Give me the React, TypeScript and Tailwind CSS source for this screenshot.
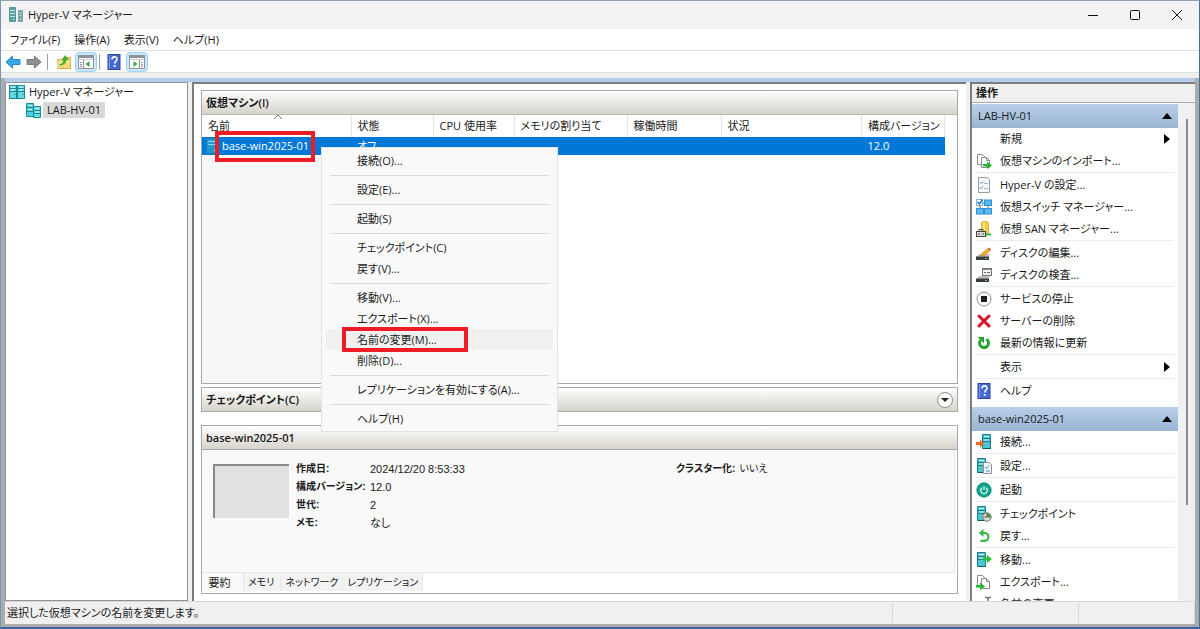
import type { ReactNode } from "react"

const ServerPair = ({ className = "size-4" }: { className?: string }) => (
  <svg viewBox="0 0 16 16" className={className}>
    <rect x="0.5" y="1.5" width="7" height="13" fill="#62dce2" stroke="#1d8996" />
    <rect x="8.5" y="1.5" width="7" height="13" fill="#62dce2" stroke="#1d8996" />
    <path d="M1 4.5h14M1 7.5h14" stroke="#1d8996" />
    <path d="M2 3h4M10 3h4M2 6h4M10 6h4" stroke="#d7f8f8" />
    <path d="M5 10.5h1M13 10.5h1" stroke="#0d6370" />
  </svg>
)

const HostIcon = () => (
  <svg viewBox="0 0 16 16" className="size-4">
    <path d="M1.5 1.500h7v13h-7z" fill="#4fd0d8" stroke="#1d8996" />
    <path d="M8.5 4.5h7v11h-7z" fill="#62dce2" stroke="#1d8996" />
    <path d="M2 5.5h6M2 9.5h6M9 8.5h6M9 11.5h6" stroke="#1d8996" />
    <path d="M3 3.500h4M3 7.5h4M10 6.5h4M10 10h4" stroke="#c5f3f4" />
  </svg>
)

const AppIcon = () => (
  <svg viewBox="0 0 16 16" className="size-4">
    <path d="M1.500 0.5h6v14h-6z" fill="#5aa3a6" stroke="#5c9599" />
    <path d="M10.5 3.5h4v11h-4z" fill="#6fa9ab" stroke="#7aa3a7" />
    <path d="M2 3.5h5M2 6.5h5M2 9.5h5M11.500 6h2M11.500 8.5h2" stroke="#c6e4e3" />
    <path d="M5 12.5h1M12 12.5h1" stroke="#e9ffff" />
  </svg>
)

const Tower = () => (
  <>
    <path d="M1.5 0.5h8v14h-8z" fill="#4cc6cf" stroke="#1b7d89" />
    <path d="M2 4.5h7M2 7.5h7" stroke="#1b7d89" />
    <path d="M3 2.5h5M3 6h5" stroke="#d5f7f8" />
    <path d="M2 14.5h8" stroke="#125c66" />
  </>
)

const SheetPair = ({ children }: { children: ReactNode }) => (
  <svg viewBox="0 0 16 16" className="size-4">
    <path d="M1.5 1.5h5l2 2v8h-7z" fill="#fff" stroke="#8c8c8c" />
    <path d="M5.500 4.500h5l3 3v7h-8z" fill="#fff" stroke="#8c8c8c" />
    <path d="M10.500 4.500v3h3" fill="none" stroke="#8c8c8c" />
    {children}
  </svg>
)

const ImportIcon = () => (
  <SheetPair>
    <path d="M7 11h4V8.500l5 4-5 3.500v-2.500H7z" fill="#22b52c" />
  </SheetPair>
)

const ExportIcon = () => (
  <SheetPair>
    <path d="M0 11h4V8.500l5 4-5 3.500v-2.500H0z" fill="#22b52c" />
  </SheetPair>
)

const SettingsIcon = () => (
  <svg viewBox="0 0 16 16" className="size-4">
    <path d="M2.500 0.500h9l2 2v13h-11z" fill="#f4f6f8" stroke="#9a9ea3" />
    <path d="M4 5.500l1 1 2-2M4 10.500l1 1 2-2" fill="none" stroke="#2c8ad8" />
    <path d="M8 6.500h4M8 11.500h4" stroke="#a8b4c0" />
  </svg>
)

const SwitchIcon = () => (
  <svg viewBox="0 0 16 16" className="size-4">
    <path d="M4 7v3M12 6v4M7 4h3M7 12h3" stroke="#5d6b78" />
    <rect x="0.5" y="0.500" width="6" height="6" fill="#fff" stroke="#8ab4d4" />
    <path d="M1.500 3l2 2 3-4.500" fill="none" stroke="#1e7fd0" strokeWidth="1.500" />
    <rect x="8.500" y="1" width="7" height="5.500" fill="#5ab8f4" stroke="#2f8fd0" />
    <rect x="0.500" y="9.500" width="7" height="5.500" fill="#5ab8f4" stroke="#2f8fd0" />
    <rect x="8.500" y="9.500" width="7" height="5.500" fill="#5ab8f4" stroke="#2f8fd0" />
  </svg>
)

const SanIcon = () => (
  <svg viewBox="0 0 16 16" className="size-4">
    <path d="M5.500 1.500c2-1.500 5-1.500 7 0v11h-7z" fill="#f1cf45" stroke="#dfb937" />
    <path d="M8 2v9" stroke="#fbeb9b" strokeWidth="1.500" />
    <path d="M9 13.500h6" stroke="#33b93a" strokeWidth="2" />
    <rect x="0.500" y="10.500" width="9" height="5" fill="#ddd" stroke="#444" />
    <path d="M3 10V8.500h4V10M3 12v2M7 12v2" fill="none" stroke="#444" />
  </svg>
)

const DiskBase = () => (
  <>
    <path d="M3 9h11l-2 4H0z" fill="#bdbdbd" />
    <path d="M0 11.500h13v3.500H0z" fill="#3d3d3d" />
    <path d="M9 13.500h2" stroke="#59d65c" />
  </>
)

const DiskEditIcon = () => (
  <svg viewBox="0 0 16 16" className="size-4">
    <DiskBase />
    <path d="M5 11l1-3 6-4.500 2 2.500-6 4.500z" fill="#f0ae2f" stroke="#b9791a" strokeWidth="0.500" />
    <path d="M12 3.500l1.500-1 1.500 2-1 1.300z" fill="#e4593b" />
  </svg>
)

const DiskCheckIcon = () => (
  <svg viewBox="0 0 16 16" className="size-4">
    <DiskBase />
    <rect x="6.500" y="1.500" width="9" height="7" fill="#f4f4f4" stroke="#777" />
    <path d="M7 2.500h8" stroke="#888" />
    <path d="M8 5.500h2M11 5.500h3" stroke="#667" />
  </svg>
)

const StopIcon = () => (
  <svg viewBox="0 0 16 16" className="size-4">
    <circle cx="8" cy="8" r="7" fill="#fff" stroke="#8d8d8d" />
    <rect x="5" y="5" width="6" height="6" fill="#1d1d1d" />
  </svg>
)

const RemoveIcon = () => (
  <svg viewBox="0 0 16 16" className="size-4">
    <path d="M3 3l10 10M13 3L3 13" stroke="#db1020" strokeWidth="3" strokeLinecap="round" />
  </svg>
)

const RefreshIcon = () => (
  <svg viewBox="0 0 16 16" className="size-4">
    <path d="M10.500 4.200a4.500 4.500 0 1 1-6 1" fill="none" stroke="#21a52d" strokeWidth="3" />
    <path d="M1.800 2h6.200v6.500z" fill="#21a52d" />
  </svg>
)

const HelpIcon = () => (
  <svg viewBox="0 0 16 16" className="size-4">
    <rect x="2" y="0.500" width="12" height="15" fill="#4468d4" stroke="#2c479f" />
    <path d="M3.500 1v14" stroke="#7f9cec" />
    <path d="M6 5.500c0-3.500 5-3.300 5-.3 0 2-2.300 2-2.300 4.300" fill="none" stroke="#fff" strokeWidth="1.600" />
    <rect x="7.800" y="11" width="1.800" height="1.800" fill="#fff" />
  </svg>
)

const ConnectIcon = () => (
  <svg viewBox="0 0 16 16" className="size-4">
    <g transform="translate(5 0)"><Tower /></g>
    <path d="M0 8h4V5.500L8 9.500l-4 4V11H0z" fill="#f26a21" />
  </svg>
)

const VmSettingsIcon = () => (
  <svg viewBox="0 0 16 16" className="size-4">
    <Tower />
    <path d="M7.500 4.500h6l2 2v9h-8z" fill="#f5f7fa" stroke="#8d949b" />
    <path d="M9 9l1.500 1.500L13 7.500M10 13h4" fill="none" stroke="#3c8edb" />
  </svg>
)

const PowerIcon = () => (
  <svg viewBox="0 0 16 16" className="size-4">
    <circle cx="8" cy="8" r="7.200" fill="#0ea58d" stroke="#0b7d6c" strokeWidth="0.800" />
    <path d="M5.800 5.800a3.300 3.300 0 1 0 4.400 0M8 4v4" fill="none" stroke="#e9fffb" strokeWidth="1.200" />
  </svg>
)

const CheckpointIcon = () => (
  <svg viewBox="0 0 16 16" className="size-4">
    <Tower />
    <circle cx="11" cy="11" r="4.200" fill="#d9dcd9" stroke="#6f7672" />
    <path d="M11 11V7a4 4 0 0 1 3.500 5.500z" fill="#3fa548" />
    <path d="M11 8v3H8.500" fill="none" stroke="#a33" />
  </svg>
)

const RevertIcon = () => (
  <svg viewBox="0 0 16 16" className="size-4">
    <path d="M6 5h2.500a3.800 3.800 0 0 1 0 7.800H4.500" fill="none" stroke="#35b83c" strokeWidth="2.200" />
    <path d="M7.500 1v8L2.800 5z" fill="#35b83c" />
  </svg>
)

const MoveIcon = () => (
  <svg viewBox="0 0 16 16" className="size-4">
    <Tower />
    <path d="M7 5.500h4V3l5 4-5 4V8.500H7z" fill="#2bbd34" />
  </svg>
)

const RenameIcon = () => (
  <svg viewBox="0 0 16 16" className="size-4">
    <path d="M9 1.500h6M12 1.500v13M9 14.500h6" stroke="#777" strokeWidth="1.500" />
    <path d="M1 5.500h9v5H1z" fill="#fff" stroke="#888" />
  </svg>
)

const ArrowIcon = ({ back }: { back?: boolean }) => (
  <svg viewBox="0 0 16 16" className="size-4">
    {back ? (
      <path d="M1 8l6.500-6v3.500H15v5H7.500V14z" fill="#3aa8ee" stroke="#2b86c8" />
    ) : (
      <path d="M15 8L8.500 2v3.500H1v5h7.500V14z" fill="#8f8f8f" stroke="#7a7a7a" />
    )}
  </svg>
)

const FolderUpIcon = () => (
  <svg viewBox="0 0 16 16" className="size-4">
    <path d="M1.500 14.500v-9h5l1-2h7v11z" fill="#f5d77c" stroke="#d3ad52" />
    <path d="M2 14V8h12" fill="none" stroke="#fdf0bd" />
    <path d="M3 10.500c3-.5 4-2 4.500-4H5.500L9 1l4 5h-2.500c-.5 4-3.500 5.500-7 5.500z" fill="#45b030" />
  </svg>
)

const PaneIcon = ({ right }: { right?: boolean }) => (
  <svg viewBox="0 0 16 16" className="size-4">
    <rect x="0.500" y="1.500" width="15" height="13" fill="#fff" stroke="#8d9299" />
    <path d="M1 3h14" stroke="#8d9299" strokeWidth="2" />
    <path d="M1 5.500h14" stroke="#c3c8cd" />
    {right ? (
      <>
        <path d="M10.500 6v8" stroke="#8d9299" />
        <path d="M12 8.500h2M12 10.500h2M12 12.500h2" stroke="#8d9299" />
        <path d="M4.500 7v6l4-3z" fill="#2fae36" />
      </>
    ) : (
      <>
        <path d="M5.500 6v8" stroke="#8d9299" />
        <path d="M2 8.500h2M2 10.500h2M2 12.500h2" stroke="#8d9299" />
        <path d="M11.500 7v6l-4-3z" fill="#2fae36" />
      </>
    )}
  </svg>
)

type Action = { label: string; icon?: ReactNode; submenu?: boolean }

const hostActions: Action[][] = [
  [
    { label: "新規", submenu: true },
    { label: "仮想マシンのインポート...", icon: <ImportIcon /> },
  ],
  [
    { label: "Hyper-V の設定...", icon: <SettingsIcon /> },
    { label: "仮想スイッチ マネージャー...", icon: <SwitchIcon /> },
    { label: "仮想 SAN マネージャー...", icon: <SanIcon /> },
  ],
  [
    { label: "ディスクの編集...", icon: <DiskEditIcon /> },
    { label: "ディスクの検査...", icon: <DiskCheckIcon /> },
  ],
  [
    { label: "サービスの停止", icon: <StopIcon /> },
    { label: "サーバーの削除", icon: <RemoveIcon /> },
    { label: "最新の情報に更新", icon: <RefreshIcon /> },
  ],
  [{ label: "表示", submenu: true }],
  [{ label: "ヘルプ", icon: <HelpIcon /> }],
]

const vmActions: Action[][] = [
  [{ label: "接続...", icon: <ConnectIcon /> }],
  [{ label: "設定...", icon: <VmSettingsIcon /> }],
  [{ label: "起動", icon: <PowerIcon /> }],
  [
    { label: "チェックポイント", icon: <CheckpointIcon /> },
    { label: "戻す...", icon: <RevertIcon /> },
  ],
  [
    { label: "移動...", icon: <MoveIcon /> },
    { label: "エクスポート...", icon: <ExportIcon /> },
    { label: "名前の変更...", icon: <RenameIcon /> },
  ],
]

const contextMenu = [
  ["接続(O)..."],
  ["設定(E)..."],
  ["起動(S)"],
  ["チェックポイント(C)", "戻す(V)..."],
  ["移動(V)...", "エクスポート(X)...", "名前の変更(M)...", "削除(D)..."],
  ["レプリケーションを有効にする(A)..."],
  ["ヘルプ(H)"],
]

const summary = [
  ["作成日:", "2024/12/20 8:53:33"],
  ["構成バージョン:", "12.0"],
  ["世代:", "2"],
  ["メモ:", "なし"],
]

function ActionGroup({ title, groups }: { title: string; groups: Action[][] }) {
  return (
    <section>
      <button className="flex h-6 w-full items-center justify-between bg-gradient-to-b from-[#b8d0e9] to-[#9ab4d3] pr-1.5 pl-1.5">
        {title}
        <svg viewBox="0 0 10 6" className="h-1.5 w-2.5">
          <path d="M5 0l5 6H0z" fill="#000" />
        </svg>
      </button>
      <div className="pr-1 pl-1">
        {groups.map((group, i) => (
          <div key={i} className={i > 0 ? "border-t border-[#ebebeb] pt-px" : ""}>
            {group.map((a) => (
              <button key={a.label} className="flex h-[22px] w-full items-center gap-2 text-left">
                <span className="size-4 shrink-0">{a.icon}</span>
                <span className="flex-1">{a.label}</span>
                {a.submenu && (
                  <svg viewBox="0 0 6 10" className="mr-1 h-2.5 w-1.5">
                    <path d="M0 0l6 5-6 5z" fill="#000" />
                  </svg>
                )}
              </button>
            ))}
          </div>
        ))}
      </div>
    </section>
  )
}

function ContextMenu() {
  return (
    <div
      role="menu"
      className="absolute top-14 left-[119px] z-10 w-[237px] border border-[#e3e3e3] bg-[#f9f9f9] px-1 py-0.5"
    >
      {contextMenu.map((group, i) => (
        <div key={i}>
          {i > 0 && <hr className="mx-1 mt-1 mb-[3px] border-t border-[#d9d9d9]" />}
          {group.map((label) => {
            const active = label === "名前の変更(M)..."
            return (
              <button
                key={label}
                role="menuitem"
                className={`relative block h-[21px] w-full rounded pl-[31px] text-left leading-[21px] ${active ? "bg-[#f0f0f0]" : ""}`}
              >
                {label}
                {active && <span className="absolute -top-0.5 left-4 h-[25px] w-[126px] border-4 border-[#ee1c25]"></span>}
              </button>
            )
          })}
        </div>
      ))}
    </div>
  )
}

const barStyle = "flex items-center bg-gradient-to-b from-white to-[#d6d3cb] px-1 font-semibold"

function VirtualMachines() {
  return (
    <section className="relative flex-1 border border-[#a9a9a9]">
      <h2 className={`${barStyle} h-6 border-b border-[#bcb9b3]`}>仮想マシン(I)</h2>
      <div className="relative mr-3">
        <table className="w-full table-fixed border-collapse text-left">
          <thead>
            <tr className="h-[22px]">
              <th className="w-[149px] border-r border-[#e5e5e5] pl-1.5 font-normal">
                名前
                <svg viewBox="0 0 8 4" className="absolute top-0 left-[72px] h-1 w-2">
                  <path d="M0 4l4-4 4 4" fill="none" stroke="#777" />
                </svg>
              </th>
              <th className="w-[82px] border-r border-[#e5e5e5] pl-1.5 font-normal">状態</th>
              <th className="w-[81px] border-r border-[#e5e5e5] pl-1.5 font-normal">CPU 使用率</th>
              <th className="w-[113px] border-r border-[#e5e5e5] pl-1.5 font-normal">メモリの割り当て</th>
              <th className="w-[94px] border-r border-[#e5e5e5] pl-1.5 font-normal">稼働時間</th>
              <th className="border-r border-[#e5e5e5] pl-1.5 font-normal">状況</th>
              <th className="w-[83px] border-r border-[#e5e5e5] pl-1.5 font-normal">構成バージョン</th>
            </tr>
          </thead>
          <tbody>
            <tr className="h-[18px] bg-[#0078d7] text-white">
              <td className="relative pl-1">
                <div className="flex items-center gap-1">
                  <svg viewBox="0 0 12 16" className="h-4 w-3">
                    <path d="M0.500 0.500h11v15h-11z" fill="#1d9bd0" stroke="#0f7fb8" />
                    <path d="M2 3.500h8M2 6.500h8" stroke="#8fd6f0" />
                    <path d="M8 12.500h2" stroke="#d5f3ff" />
                  </svg>
                  base-win2025-01
                </div>
                <span className="absolute -top-1.5 left-[13px] h-[31px] w-[100px] border-4 border-[#ee1c25]"></span>
              </td>
              <td className="pl-1.5">オフ</td>
              <td></td>
              <td></td>
              <td></td>
              <td></td>
              <td className="pl-1.5">12.0</td>
            </tr>
          </tbody>
        </table>
      </div>
      <div className="absolute top-[65px] bottom-0 left-0 -z-10 w-[149px] bg-[#f7f7f7]"></div>
      <ContextMenu />
    </section>
  )
}

function Details() {
  return (
    <section className="border border-[#a9a9a9] bg-white">
      <h2 className={`${barStyle} h-6 border-b border-[#a9a9a9]`}>base-win2025-01</h2>
      <div className="mr-0.5 flex h-[123px] border-r border-b border-[#e8e8e8] bg-[#f9f9f9] pt-2.5 pl-[11px] font-['Liberation_Sans','Noto_Sans_CJK_JP',sans-serif]">
        <div className="mt-1 mr-[7px] h-[54px] w-[76px] border-t-2 border-l-2 border-[#8a8a8a] bg-[#e1e1e1]"></div>
        <dl className="grid w-[380px] grid-cols-[74px_1fr] content-start">
          {summary.map(([term, value]) => (
            <div key={term} className="contents leading-[18px]">
              <dt className="text-[10px] leading-[18px] font-bold">{term}</dt>
              <dd>{value}</dd>
            </div>
          ))}
        </dl>
        <dl className="flex gap-1 leading-[18px]">
          <dt className="text-[10px] leading-[18px] font-bold">クラスター化:</dt>
          <dd className="text-[10px] leading-[18px]">いいえ</dd>
        </dl>
      </div>
      <div role="tablist" className="flex h-5 items-start">
        <button role="tab" aria-selected="true" className="h-[19px] w-[42px] border-r border-[#e8e8e8] bg-[#f9f9f9] pr-1.5">
          要約
        </button>
        <button role="tab" className="h-[18px] border-r border-[#e8e8e8] bg-[#f3f3f3] pr-1.5 pl-1 text-[10px]">メモリ</button>
        <button role="tab" className="h-[18px] border-r border-[#e8e8e8] bg-[#f3f3f3] px-1 text-[10px]">ネットワーク</button>
        <button role="tab" className="h-[18px] border-r border-[#e8e8e8] bg-[#f3f3f3] px-1 text-[10px]">レプリケーション</button>
      </div>
    </section>
  )
}

export default function App() {
  return (
    <div className="flex h-screen flex-col overflow-hidden border border-t-[#8fa3b5] border-r-[#3f74ab] border-b-2 border-l-[#7394b8] border-b-[#3f62a8] bg-[#f0f0f0] font-['Open_Sans','Noto_Sans_CJK_JP',sans-serif] text-[11px] leading-4 whitespace-nowrap text-[#1a1a1a] [font-feature-settings:'palt']">
      <header className="flex h-7 shrink-0 items-center gap-1 bg-[#f3f3f3] pr-px pl-[7px]">
        <AppIcon />
        <h1 className="flex-1">Hyper-V マネージャー</h1>
        <button aria-label="最小化" className="flex h-full w-[42px] items-center justify-center">
          <svg viewBox="0 0 10 10" className="size-2.5"><path d="M0 5.500h10" stroke="#111" /></svg>
        </button>
        <button aria-label="最大化" className="flex h-full w-[34px] items-center justify-center">
          <svg viewBox="0 0 10 10" className="size-2.5"><rect x="0.500" y="0.500" width="9" height="9" rx="1" fill="none" stroke="#111" /></svg>
        </button>
        <button aria-label="閉じる" className="flex h-full w-[42px] items-center justify-center">
          <svg viewBox="0 0 10 10" className="size-2.5"><path d="M0 0l10 10M10 0L0 10" stroke="#111" /></svg>
        </button>
      </header>

      <nav className="flex h-[21px] shrink-0 items-center gap-3.5 bg-white pl-[9px]">
        <button>ファイル(F)</button>
        <button>操作(A)</button>
        <button>表示(V)</button>
        <button>ヘルプ(H)</button>
      </nav>

      <div className="flex h-[23px] shrink-0 items-center border-y border-[#e0e0e0] bg-white pl-1">
        <button aria-label="戻る"><ArrowIcon back /></button>
        <button aria-label="進む" className="ml-[5px]"><ArrowIcon /></button>
        <span className="mx-[5px] h-4 w-px bg-[#a0a0a0]"></span>
        <button aria-label="上へ" className="mx-[3px]"><FolderUpIcon /></button>
        <button aria-label="コンソール ツリー" className="flex h-5 w-[22px] items-center justify-center rounded-sm border border-[#99d1ff] bg-[#cce8ff]">
          <PaneIcon />
        </button>
        <span className="mr-1.5 ml-0.5 h-4 w-px bg-[#a0a0a0]"></span>
        <button aria-label="ヘルプ"><HelpIcon /></button>
        <button aria-label="操作ウィンドウ" className="ml-1 flex h-5 w-[22px] items-center justify-center rounded-sm border border-[#99d1ff] bg-[#cce8ff]">
          <PaneIcon right />
        </button>
      </div>

      <div className="mt-[5px] flex min-h-0 flex-1 flex-col border-x-4 border-b-[3px] border-[#ababab]">
        <div className="h-1 shrink-0 bg-[#b4cce8]"></div>
        <div className="flex min-h-0 flex-1 gap-1">
          <aside className="w-[183px] border border-[#90949a] bg-white pl-[3px]">
            <button className="flex h-[18px] items-center gap-1">
              <ServerPair />
              Hyper-V マネージャー
            </button>
            <div className="flex h-[17px] items-center pl-4">
              <HostIcon />
              <button className="ml-0.5 bg-[#d9d9d9] px-1">LAB-HV-01</button>
            </div>
          </aside>

          <main className="flex min-w-0 flex-1 flex-col border-t-2 border-l-2 border-[#7d7d7d] bg-white pt-1.5 pr-2 pb-[7px] pl-[7px]">
            <div className="isolate z-10 flex flex-1 flex-col">
              <VirtualMachines />
            </div>
            <section className={`${barStyle} mt-[3px] h-[25px] shrink-0 justify-between border border-[#a9a9a9]`}>
              <h2>チェックポイント(C)</h2>
              <button aria-label="展開" className="flex size-4 items-center justify-center rounded-full border border-[#8f8f8f] bg-white">
                <svg viewBox="0 0 8 4" className="h-1 w-2"><path d="M0 0h8L4 4z" fill="#222" /></svg>
              </button>
            </section>
            <div className="mt-[13px] shrink-0">
              <Details />
            </div>
          </main>

          <aside className="flex w-[225px] flex-col border-t-2 border-l-2 border-[#7d7d7d]">
            <h2 className="h-[19px] shrink-0 border-b border-[#a9a9a9] pl-1 leading-[18px] font-semibold">操作</h2>
            <div className="flex min-h-0 flex-1">
              <div className="flex flex-1 flex-col gap-[5px] overflow-hidden bg-white pt-px">
                <ActionGroup title="LAB-HV-01" groups={hostActions} />
                <ActionGroup title="base-win2025-01" groups={vmActions} />
              </div>
              <div className="flex w-[17px] justify-center pt-4">
                <div className="h-4/5 w-0.5 bg-[#8a8a8a]"></div>
              </div>
            </div>
          </aside>
        </div>

        <footer className="flex h-[23px] shrink-0 items-center border-t border-[#d7d7d7] pl-0.5">
          <span className="flex-1">選択した仮想マシンの名前を変更します。</span>
          <span className="h-5 w-[186px] border-l border-[#d7d7d7]"></span>
          <span className="h-5 w-[117px] border-x border-[#d7d7d7]"></span>
        </footer>
      </div>
    </div>
  )
}
